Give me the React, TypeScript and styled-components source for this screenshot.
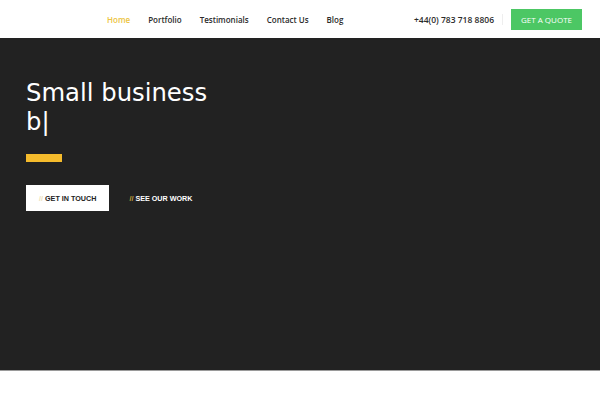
import { FC } from "react";
import styled, { createGlobalStyle } from "styled-components";

const GlobalStyle = createGlobalStyle`
  body {
    margin: 0;
    background: #ffffff;
    font-family: "Liberation Sans", Arial, sans-serif;
  }
`;

const Header = styled.header`
  height: 38px;
  display: flex;
  align-items: center;
  padding: 0 18px 0 107px;
  background: #ffffff;
`;

const Nav = styled.nav`
  display: flex;
  gap: 18px;
`;

const NavLink = styled.a<{ $active?: boolean }>`
  font-family: "Open Sans", sans-serif;
  font-size: 8px;
  font-weight: 600;
  color: ${(p) => (p.$active ? "#ecc441" : "#2b2b2b")};
  text-decoration: none;
`;

const Phone = styled.span`
  margin-left: auto;
  font-family: "Open Sans", sans-serif;
  font-size: 8.5px;
  font-weight: 600;
  color: #2b2b2b;
  padding-right: 8px;
  border-right: 1px solid #eeeeee;
`;

const QuoteBtn = styled.button`
  margin-left: 8px;
  width: 71px;
  height: 21px;
  border: none;
  background: #4cc764;
  color: #ffffff;
  font-family: "Open Sans", sans-serif;
  font-size: 8px;
  font-weight: 400;
  padding: 0;
`;

const Hero = styled.section`
  height: 333px;
  background: #222222;
  border-bottom: 1px solid #9a9a9a;
  padding: 40px 26px 0;
  box-sizing: border-box;
`;

const Title = styled.h1`
  margin: 0;
  font-family: "DejaVu Sans", sans-serif;
  font-weight: 400;
  font-size: 24.3px;
  line-height: 29px;
  color: #ffffff;
`;

const Bar = styled.div`
  margin-top: 18px;
  width: 36px;
  height: 8px;
  background: #f5bb2c;
`;

const Actions = styled.div`
  margin-top: 23px;
  display: flex;
  align-items: center;
  gap: 20px;
`;

const Action = styled.a<{ $filled?: boolean }>`
  display: flex;
  align-items: center;
  justify-content: center;
  height: 26px;
  padding: 0 ${(p) => (p.$filled ? "13px" : "0")};
  background: ${(p) => (p.$filled ? "#ffffff" : "transparent")};
  color: ${(p) => (p.$filled ? "#222222" : "#ffffff")};
  font-family: "Liberation Sans", Arial, sans-serif;
  font-size: 7.2px;
  font-weight: 700;
  text-decoration: none;
`;

const Slash = styled.span<{ $light?: boolean }>`
  color: ${(p) => (p.$light ? "#ece0b8" : "#c9a53c")};
  margin-right: 2px;
`;

const App: FC = () => {
  return (
    <>
      <GlobalStyle />
      <Header>
        <Nav>
          <NavLink $active>Home</NavLink>
          <NavLink>Portfolio</NavLink>
          <NavLink>Testimonials</NavLink>
          <NavLink>Contact Us</NavLink>
          <NavLink>Blog</NavLink>
        </Nav>
        <Phone>+44(0) 783 718 8806</Phone>
        <QuoteBtn>GET A QUOTE</QuoteBtn>
      </Header>
      <Hero>
        <Title>
          Small business
          <br />
          b|
        </Title>
        <Bar />
        <Actions>
          <Action $filled>
            <Slash $light>//</Slash>GET IN TOUCH
          </Action>
          <Action>
            <Slash>//</Slash>SEE OUR WORK
          </Action>
        </Actions>
      </Hero>
    </>
  );
};

export default App;
